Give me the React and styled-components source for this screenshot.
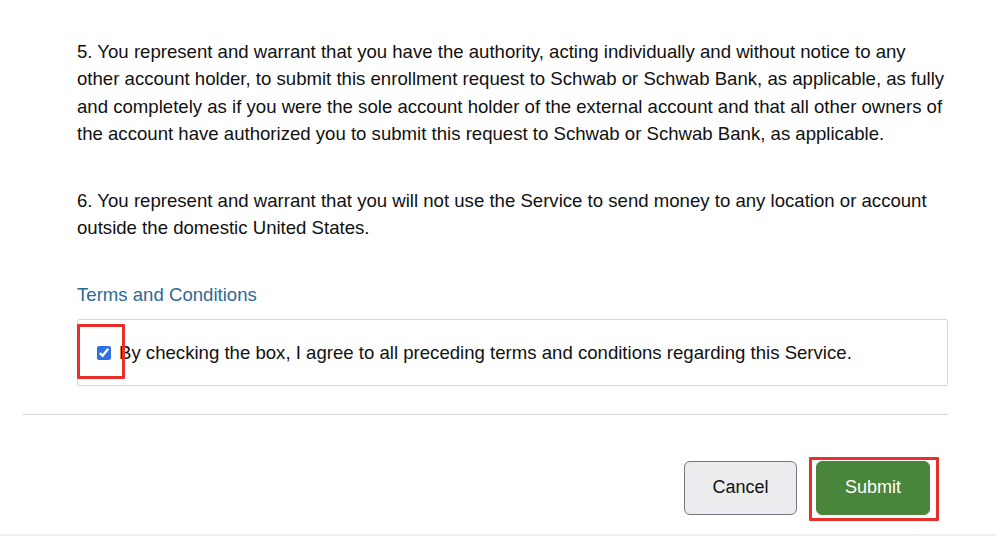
import React from "react";
import styled, { createGlobalStyle } from "styled-components";

const Global = createGlobalStyle`
  html, body { margin: 0; padding: 0; background: #fff; }
  body { font-family: "Liberation Sans", Arial, sans-serif; color: #111; }
`;

const Page = styled.div`
  width: 996px;
  height: 536px;
  position: relative;
  overflow: hidden;
  box-sizing: border-box;
  border-bottom: 2px solid #efefef;
`;

const Content = styled.div`
  padding: 38px 48px 0 77px;
`;

const Para = styled.p`
  margin: 0 0 40px;
  font-size: 18.6px;
  line-height: 27.3px;
  color: #111;
`;

const SectionTitle = styled.div`
  font-size: 18.6px;
  line-height: 27px;
  color: #2d6a96;
  margin-top: -1px;
`;

const AgreeBox = styled.label`
  display: flex;
  align-items: center;
  margin-top: 11px;
  height: 67px;
  box-sizing: border-box;
  border: 1px solid #d6d8db;
  border-radius: 2px;
  padding: 2px 0 0 19px;
  font-size: 18.6px;
  color: #111;
`;

const Check = styled.input`
  width: 14px;
  height: 14px;
  margin: 0 8px 0 0;
  accent-color: #2f6fe4;
`;

const Divider = styled.hr`
  margin: 28px 48px 0 22px;
  border: none;
  border-top: 1px solid #d9d9d9;
`;

const Actions = styled.div`
  display: flex;
  justify-content: flex-end;
  gap: 19px;
  padding: 46px 66px 0 0;
`;

const Button = styled.button`
  width: ${(p) => p.$w}px;
  height: 54px;
  border-radius: 6px;
  font-family: "Liberation Sans", Arial, sans-serif;
  font-size: 18px;
  cursor: pointer;
  border: 1px solid ${(p) => (p.$primary ? "#4a853c" : "#737880")};
  background: ${(p) => (p.$primary ? "#4a853c" : "#ebecee")};
  color: ${(p) => (p.$primary ? "#fff" : "#111")};
`;

const Highlight = styled.div`
  position: absolute;
  left: ${(p) => p.$x}px;
  top: ${(p) => p.$y}px;
  width: ${(p) => p.$w}px;
  height: ${(p) => p.$h}px;
  box-sizing: border-box;
  border: 3px solid #e8302a;
  border-radius: 1px;
  pointer-events: none;
`;

export default function App() {
  return (
    <>
      <Global />
      <Page>
        <Content>
          <Para>
            5. You represent and warrant that you have the authority, acting individually and without notice to any
            other account holder, to submit this enrollment request to Schwab or Schwab Bank, as applicable, as fully
            and completely as if you were the sole account holder of the external account and that all other owners of
            the account have authorized you to submit this request to Schwab or Schwab Bank, as applicable.
          </Para>
          <Para>
            6. You represent and warrant that you will not use the Service to send money to any location or account
            outside the domestic United States.
          </Para>
          <SectionTitle>Terms and Conditions</SectionTitle>
          <AgreeBox>
            <Check type="checkbox" defaultChecked />
            By checking the box, I agree to all preceding terms and conditions regarding this Service.
          </AgreeBox>
        </Content>
        <Divider />
        <Actions>
          <Button $w={113}>Cancel</Button>
          <Button $w={114} $primary>Submit</Button>
        </Actions>
        <Highlight $x={77} $y={324} $w={48} $h={55} />
        <Highlight $x={809} $y={457} $w={130} $h={64} />
      </Page>
    </>
  );
}
